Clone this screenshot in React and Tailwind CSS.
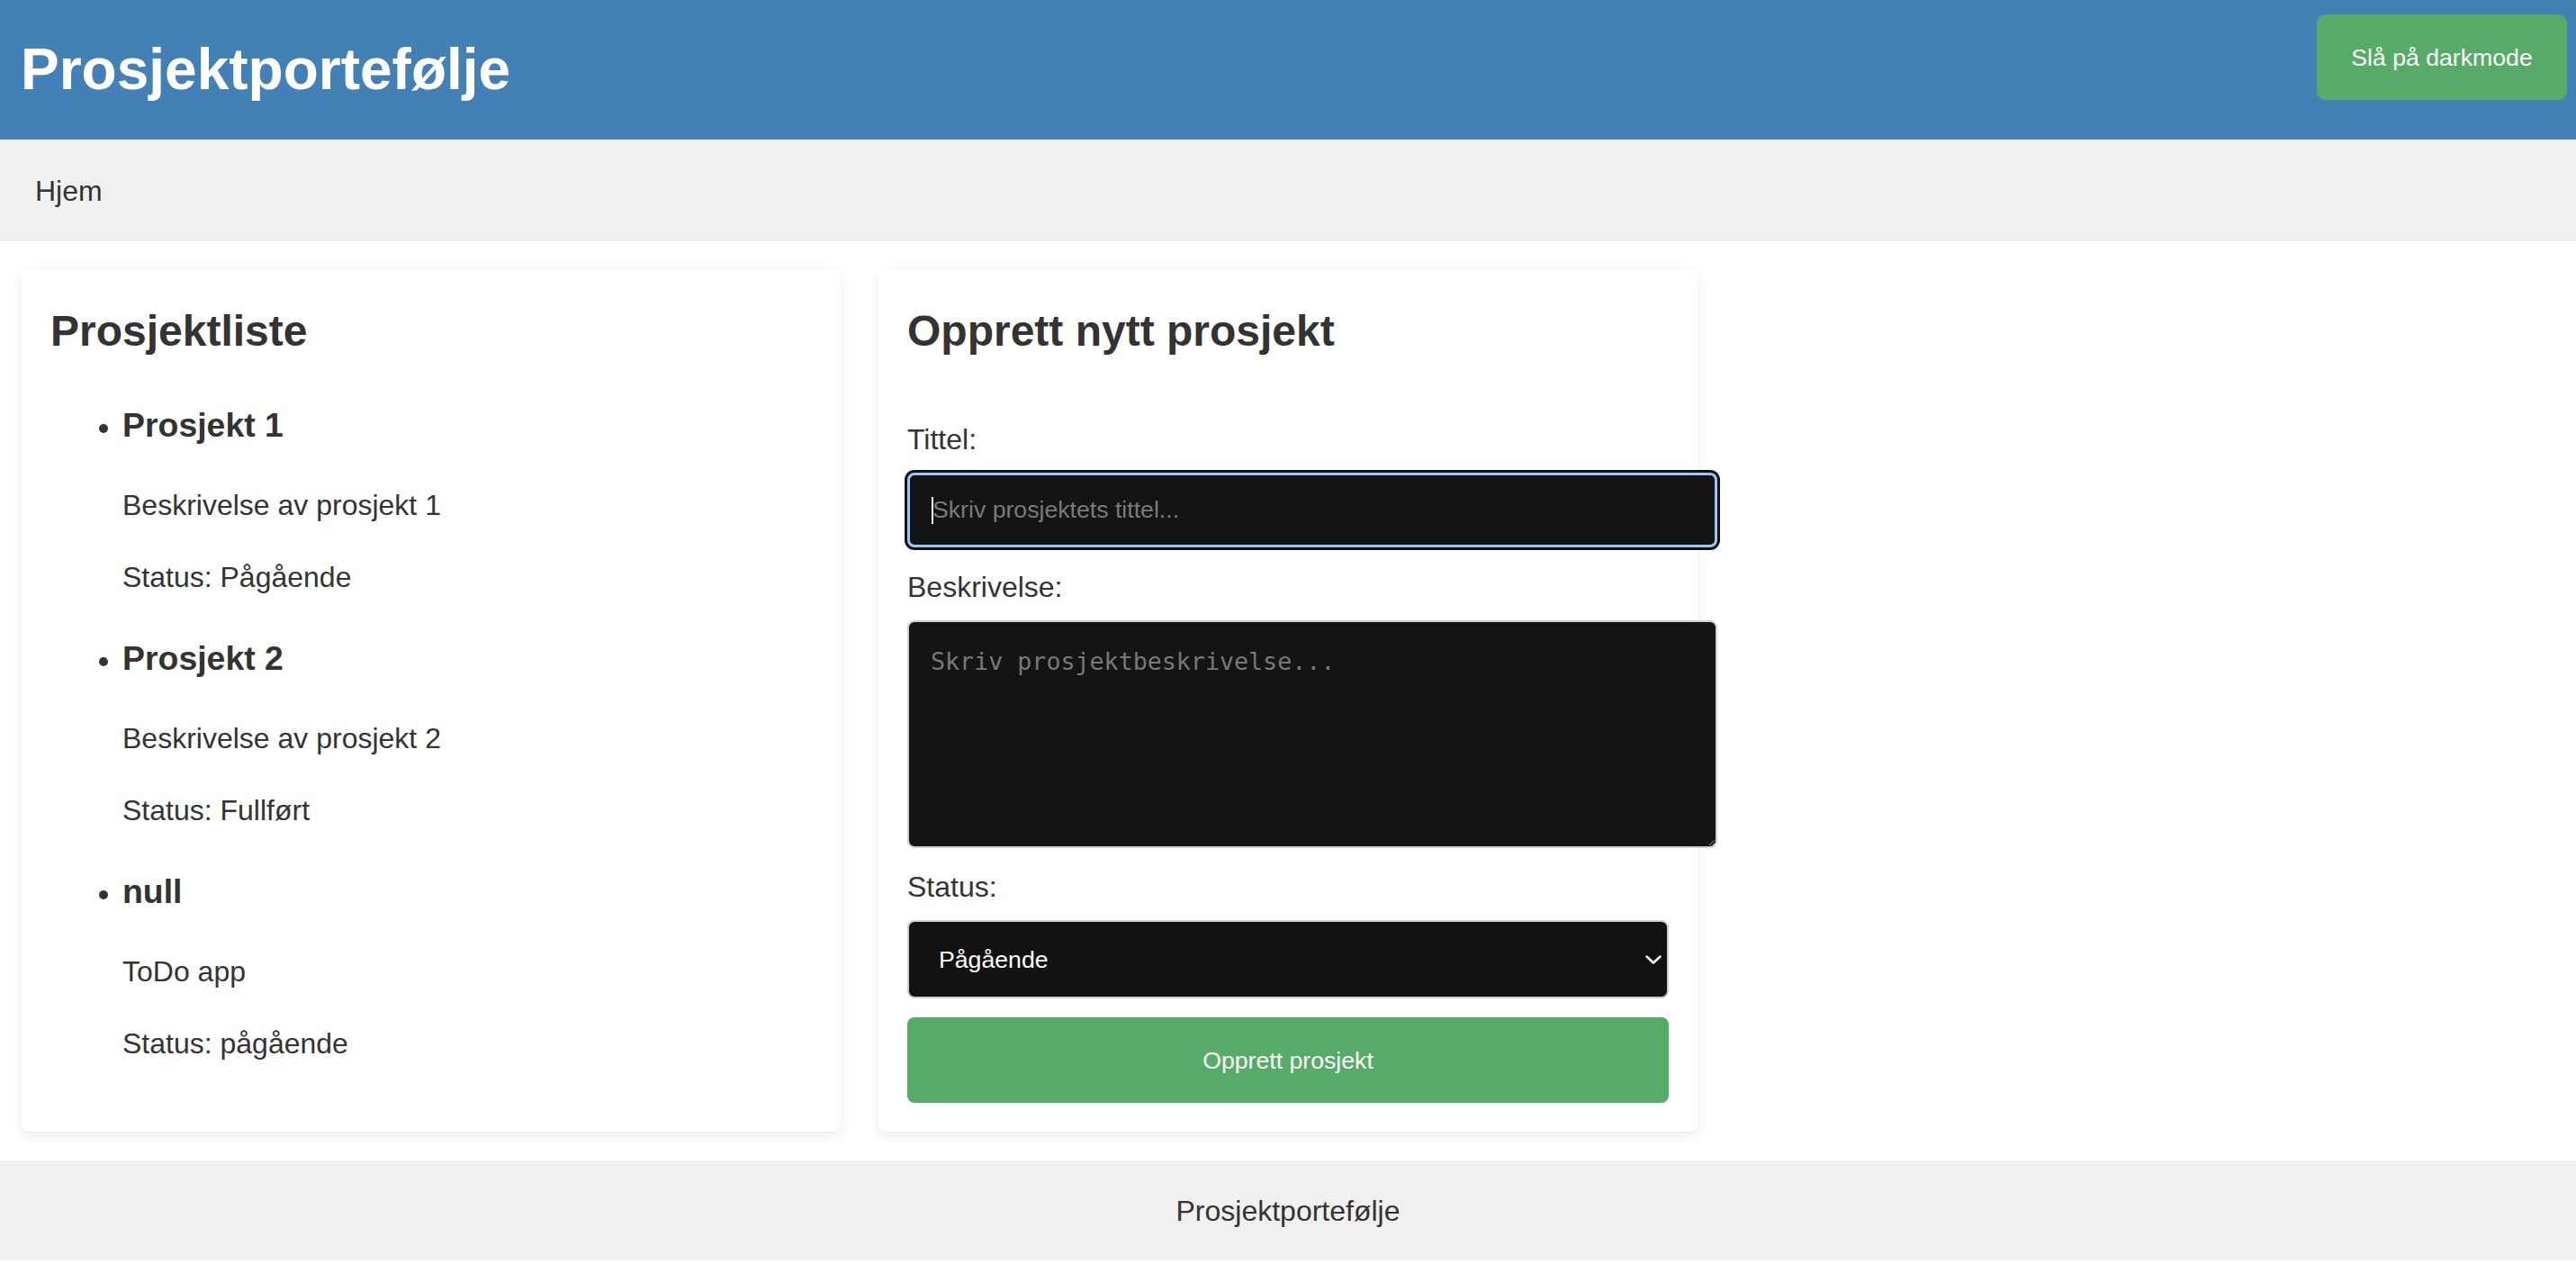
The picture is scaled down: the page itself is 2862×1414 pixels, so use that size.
import { useState } from 'react';

const projects = [
  { id: 1, title: 'Prosjekt 1', description: 'Beskrivelse av prosjekt 1', status: 'Pågående' },
  { id: 2, title: 'Prosjekt 2', description: 'Beskrivelse av prosjekt 2', status: 'Fullført' },
  { id: 3, title: 'null', description: 'ToDo app', status: 'pågående' },
];

const ProjectList = () => (
  <section className="rounded-[10px] bg-white p-[32px] shadow-[0_4px_14px_rgba(0,0,0,0.09)]">
    <h2 className="mb-[39.84px] text-[48px] font-bold leading-[1.5]">Prosjektliste</h2>
    <ul className="my-[32px] list-disc pl-[80px] text-[32px] leading-[1.5]">
      {projects.map((p) => (
        <li key={p.id}>
          <h3 className="my-[37.44px] text-[37.44px] font-bold leading-[1.5]">{p.title}</h3>
          <p className="my-[32px]">{p.description}</p>
          <p className="my-[32px]">Status: {p.status}</p>
        </li>
      ))}
    </ul>
  </section>
);

const NewProjectForm = () => {
  const [status, setStatus] = useState('Pågående');

  return (
    <section className="rounded-[10px] bg-white p-[32px] shadow-[0_4px_14px_rgba(0,0,0,0.09)]">
      <h2 className="mb-[40px] text-[48px] font-bold leading-[1.5]">Opprett nytt prosjekt</h2>
      <form className="pt-[20px]" onSubmit={(e) => e.preventDefault()}>
        <label className="mb-[13px] block text-[32px] leading-[1.5]">Tittel:</label>
        <div className="relative mb-[20px] w-[900px]">
          <input
            type="text"
            placeholder="Skriv prosjektets tittel..."
            className="block h-[83px] w-[900px] rounded-[8px] border-[3px] border-[#9ec5f8] bg-[#141414] pl-[25px] text-[26.67px] text-white ring-3 ring-[#121212] outline-none placeholder:text-[#7a7a7a]"
          />
          {/* caret */}
          <span className="absolute left-[27px] top-[27px] h-[30px] w-[2px] bg-white" />
        </div>

        <label className="mb-[13px] block text-[32px] leading-[1.5]">Beskrivelse:</label>
        <textarea
          placeholder="Skriv prosjektbeskrivelse..."
          className="mb-[19px] block h-[253px] w-[900px] resize rounded-[8px] border-2 border-[#d0d0d0] bg-[#141414] p-[24px] font-['DejaVu_Sans_Mono',monospace] text-[26.67px] leading-normal text-white placeholder:text-[#787878]"
        />

        <label className="mb-[13px] block text-[32px] leading-[1.5]">Status:</label>
        <div className="relative mb-[21px]">
          <select
            value={status}
            onChange={(e) => setStatus(e.target.value)}
            className="block h-[87px] w-full appearance-none rounded-[8px] border-2 border-[#d0d0d0] bg-[#121212] pl-[33px] text-[26.67px] text-white"
          >
            <option>Pågående</option>
            <option>Fullført</option>
          </select>
          <svg
            className="pointer-events-none absolute right-[8px] top-1/2 -translate-y-1/2"
            width="18"
            height="10"
            viewBox="0 0 18 10"
            fill="none"
          >
            <path d="M1.5 1.5 9 8.5 16.5 1.5" stroke="white" strokeWidth="2.4" strokeLinecap="round" strokeLinejoin="round" />
          </svg>
        </div>

        <button
          type="submit"
          className="flex h-[95px] w-full items-center justify-center rounded-[8px] bg-[#56ab68] text-[26.67px] text-white"
        >
          Opprett prosjekt
        </button>
      </form>
    </section>
  );
};

export default function App() {
  return (
    <div className="bg-white font-['Liberation_Sans',Arial,sans-serif] text-[#333]">
      <header className="flex h-[155px] items-start justify-between bg-[#4380b5] pl-[23px] pr-[10px]">
        <h1 className="mt-[29px] text-[64px] font-bold leading-[96px] text-white">Prosjektportefølje</h1>
        <button
          type="button"
          className="mt-[16px] flex h-[95px] w-[278px] items-center justify-center rounded-[10px] bg-[#56ab68] text-[26.67px] text-white"
        >
          Slå på darkmode
        </button>
      </header>

      <nav className="flex h-[113px] items-center bg-[#f0f0f0] pl-[39px]">
        <a className="text-[32px] text-[#333]">Hjem</a>
      </nav>

      <main className="grid grid-cols-3 gap-[42px] px-[24px] py-[32px]">
        <ProjectList />
        <NewProjectForm />
      </main>

      <footer className="flex h-[111px] items-center justify-center bg-[#f0f0f0] text-[32px]">
        Prosjektportefølje
      </footer>
    </div>
  );
}
